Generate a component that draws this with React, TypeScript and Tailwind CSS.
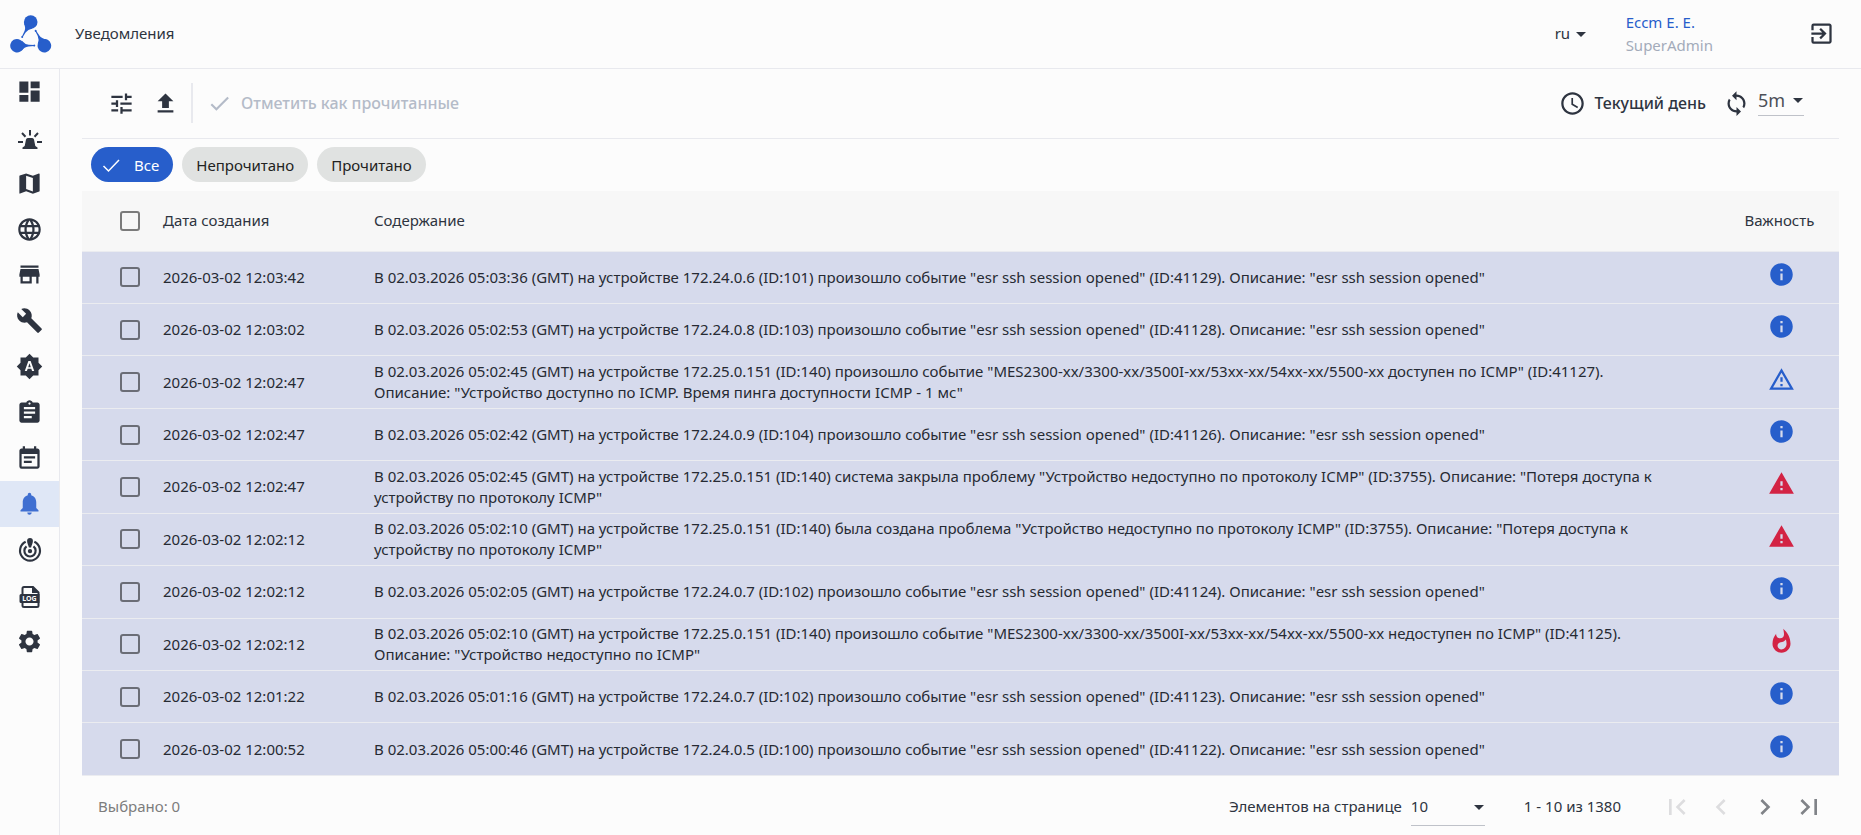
import React, { useState } from 'react';
import {
  MdArrowDropDown,
  MdAssignment,
  MdBrightnessAuto,
  MdBuild,
  MdCheck,
  MdChevronLeft,
  MdChevronRight,
  MdDashboard,
  MdEventNote,
  MdExitToApp,
  MdFirstPage,
  MdInfo,
  MdLanguage,
  MdLastPage,
  MdMap,
  MdNotifications,
  MdOutlineWarningAmber,
  MdSchedule,
  MdSettings,
  MdStore,
  MdSync,
  MdTune,
  MdUpload,
  MdWarning,
  MdWhatshot,
} from 'react-icons/md';

type Severity = 'info' | 'notice' | 'warning' | 'critical';

interface Notification {
  id: number;
  date: string;
  text: string;
  severity: Severity;
}

const sshEvent = (time: string, ip: string, device: number, id: number) =>
  `В 02.03.2026 ${time} (GMT) на устройстве ${ip} (ID:${device}) произошло событие "esr ssh session opened" (ID:${id}). Описание: "esr ssh session opened"`;

const notifications: Notification[] = [
  { id: 1, date: '2026-03-02 12:03:42', severity: 'info', text: sshEvent('05:03:36', '172.24.0.6', 101, 41129) },
  { id: 2, date: '2026-03-02 12:03:02', severity: 'info', text: sshEvent('05:02:53', '172.24.0.8', 103, 41128) },
  {
    id: 3,
    date: '2026-03-02 12:02:47',
    severity: 'notice',
    text: 'В 02.03.2026 05:02:45 (GMT) на устройстве 172.25.0.151 (ID:140) произошло событие "MES2300-xx/3300-xx/3500I-xx/53xx-xx/54xx-xx/5500-xx доступен по ICMP" (ID:41127). Описание: "Устройство доступно по ICMP. Время пинга доступности ICMP - 1 мс"',
  },
  { id: 4, date: '2026-03-02 12:02:47', severity: 'info', text: sshEvent('05:02:42', '172.24.0.9', 104, 41126) },
  {
    id: 5,
    date: '2026-03-02 12:02:47',
    severity: 'warning',
    text: 'В 02.03.2026 05:02:45 (GMT) на устройстве 172.25.0.151 (ID:140) система закрыла проблему "Устройство недоступно по протоколу ICMP" (ID:3755). Описание: "Потеря доступа к устройству по протоколу ICMP"',
  },
  {
    id: 6,
    date: '2026-03-02 12:02:12',
    severity: 'warning',
    text: 'В 02.03.2026 05:02:10 (GMT) на устройстве 172.25.0.151 (ID:140) была создана проблема "Устройство недоступно по протоколу ICMP" (ID:3755). Описание: "Потеря доступа к устройству по протоколу ICMP"',
  },
  { id: 7, date: '2026-03-02 12:02:12', severity: 'info', text: sshEvent('05:02:05', '172.24.0.7', 102, 41124) },
  {
    id: 8,
    date: '2026-03-02 12:02:12',
    severity: 'critical',
    text: 'В 02.03.2026 05:02:10 (GMT) на устройстве 172.25.0.151 (ID:140) произошло событие "MES2300-xx/3300-xx/3500I-xx/53xx-xx/54xx-xx/5500-xx недоступен по ICMP" (ID:41125). Описание: "Устройство недоступно по ICMP"',
  },
  { id: 9, date: '2026-03-02 12:01:22', severity: 'info', text: sshEvent('05:01:16', '172.24.0.7', 102, 41123) },
  { id: 10, date: '2026-03-02 12:00:52', severity: 'info', text: sshEvent('05:00:46', '172.24.0.5', 100, 41122) },
];

// One drop with a tail, repeated three times around the centre
const Logo = () => (
  <svg width="42" height="40" viewBox="0 0 42 40" fill="#275ecb" aria-hidden="true">
    {[0, 120, 240].map((angle) => (
      <g key={angle} transform={`rotate(${angle} 20.7 24.8)`}>
        <circle cx="20.7" cy="9" r="6.8" />
        <path d="M14 10Q16 15 14.3 18.500L11.800 23.800L12.600 24.300L15.600 19.600Q17.800 16.500 22.500 15.600Z" />
        <circle cx="12.200" cy="24" r="1" />
      </g>
    ))}
  </svg>
);

const AlarmIcon = () => (
  <svg width="24" height="24" viewBox="0 -3 24 24" aria-hidden="true">
    <path d="M6.700 17 8 10.500Q8.300 9 9.800 9h4.400q1.500 0 1.800 1.500L17.300 17 19.500 18.500V20H4.500v-1.500Z" fill="currentColor" />
    <path d="M12 1v5.500M4 4l3.500 3.700M20 4l-3.500 3.700M0 13h5M19 13h5" stroke="currentColor" strokeWidth="2" fill="none" />
  </svg>
);

const RadarIcon = () => (
  <svg width="26" height="26" viewBox="0 -1 24 24" aria-hidden="true">
    <g fill="none" stroke="currentColor" strokeWidth="2">
      <path d="M8 3.300a9.200 9.200 0 1 0 8 0" />
      <path d="M8.800 7.700a5.200 5.200 0 1 0 6.400 0" />
    </g>
    <circle cx="12" cy="12" r="2" fill="currentColor" />
    <path d="M12 0a2.700 2.700 0 0 1 2.700 2.700c0 2-1.200 4-1.700 6h-2c-.5-2-1.700-4-1.700-6A2.700 2.700 0 0 1 12 0Z" fill="currentColor" />
  </svg>
);

const LogIcon = () => (
  <svg width="24" height="26" viewBox="0 -3 24 26" aria-hidden="true">
    <path d="M4.500 9V3.500q0-1.500 1.500-1.500h9l5.500 5.500v13q0 1.500-1.500 1.500H6q-1.500 0-1.500-1.500V17" fill="none" stroke="currentColor" strokeWidth="2" />
    <path d="M14 1.500V8h7ZM3 9h18.500v9H3q-1.500 0-1.500-1.500v-6Q1.500 9 3 9Z" fill="currentColor" />
    <text x="11.500" y="16" textAnchor="middle" fill="#fcfcfc" fontSize="7" fontWeight="700">LOG</text>
  </svg>
);

const ChipCheck = () => (
  <svg width="24" height="24" viewBox="0 0 24 24" fill="none" stroke="currentColor" strokeWidth="1.5" aria-hidden="true">
    <path d="m2.500 13 5 5L18 7" />
  </svg>
);

const navItems = [
  { label: 'Панель', icon: <MdDashboard size={27} /> },
  { label: 'Аварии', icon: <AlarmIcon /> },
  { label: 'Карта', icon: <MdMap size={27} /> },
  { label: 'Сеть', icon: <MdLanguage size={27} /> },
  { label: 'Хранилище', icon: <MdStore size={27} /> },
  { label: 'Инструменты', icon: <MdBuild size={27} /> },
  { label: 'Автоматизация', icon: <MdBrightnessAuto size={27} /> },
  { label: 'Задачи', icon: <MdAssignment size={27} /> },
  { label: 'Календарь', icon: <MdEventNote size={27} /> },
  { label: 'Уведомления', icon: <MdNotifications size={27} />, active: true },
  { label: 'Мониторинг', icon: <RadarIcon /> },
  { label: 'Журнал', icon: <LogIcon /> },
  { label: 'Настройки', icon: <MdSettings size={27} /> },
];

const severityIcons: Record<Severity, React.ReactNode> = {
  info: <MdInfo size={27} color="#275ecb" />,
  notice: <MdOutlineWarningAmber size={27} color="#275ecb" />,
  warning: <MdWarning size={27} color="#d32344" />,
  critical: <MdWhatshot size={27} color="#d32344" />,
};

const Checkbox = ({ label, checked, onChange }: { label: string; checked: boolean; onChange: () => void }) => (
  <input
    type="checkbox"
    aria-label={label}
    checked={checked}
    onChange={onChange}
    className="block size-5 appearance-none rounded-[3px] border-2 border-black/50 checked:border-[#275ecb] checked:bg-[#275ecb]"
  />
);

const filters = ['Все', 'Непрочитано', 'Прочитано'];

const App = () => {
  const [filter, setFilter] = useState('Все');
  const [selected, setSelected] = useState<number[]>([]);

  const toggle = (id: number) =>
    setSelected((prev) => (prev.includes(id) ? prev.filter((x) => x !== id) : [...prev, id]));

  const toggleAll = () =>
    setSelected(selected.length === notifications.length ? [] : notifications.map((n) => n.id));

  return (
    <div className="flex min-h-screen flex-col bg-[#fcfcfc] font-['Noto_Sans',sans-serif] text-[15px] leading-[21px] text-[#2e3440]">
      <header className="flex h-[69px] items-center border-b border-[#e8e9ee] pr-[26px] pb-[2px] pl-[10px]">
        <a href="#" aria-label="Главная">
          <Logo />
        </a>
        <h1 className="ml-[23px] flex-1">Уведомления</h1>
        <div className="relative mr-[38px]">
          <select aria-label="Язык" className="w-[33px] appearance-none bg-transparent">
            <option>ru</option>
          </select>
          <MdArrowDropDown size={24} className="pointer-events-none absolute -top-px left-[14px]" />
        </div>
        <div className="mr-[95px] pt-[2px] leading-[23px]">
          <a href="#" className="block text-[#275ecb]">Eccm E. E.</a>
          <div className="text-[#a3abba]">SuperAdmin</div>
        </div>
        <button aria-label="Выйти">
          <MdExitToApp size={27} />
        </button>
      </header>

      <div className="flex flex-1">
        <nav className="w-[60px] shrink-0 border-r border-[#e8e9ee]">
          <div className="flex h-[595px] flex-col">
            {navItems.map((item) => (
              <a
                key={item.label}
                href="#"
                aria-label={item.label}
                className={`flex flex-1 items-center justify-center ${item.active ? 'bg-[#dfe7f6] text-[#3f6fd1]' : ''}`}
              >
                {item.icon}
              </a>
            ))}
          </div>
        </nav>

        <main className="min-w-0 flex-1 px-[22px]">
          <div className="flex h-[70px] items-center border-b border-[#e8e9ee] pr-[35px] pb-px pl-[26px]">
            <button aria-label="Фильтры">
              <MdTune size={27} />
            </button>
            <button aria-label="Экспорт" className="ml-[17px]">
              <MdUpload size={27} />
            </button>
            <div className="ml-3 h-10 w-[2px] bg-[#e8e9ee]" />
            <button disabled className="ml-[14px] flex items-center gap-[9px] text-base font-medium text-[#b4bbc8]">
              <MdCheck size={25} />
              Отметить как прочитанные
            </button>
            <button className="ml-auto flex items-center gap-[8px] text-base font-medium">
              <MdSchedule size={27} />
              Текущий день
            </button>
            <button aria-label="Обновить" className="ml-[17px]">
              <MdSync size={27} />
            </button>
            <div className="relative mb-[2px] ml-[8px]">
              <select
                aria-label="Интервал обновления"
                className="block h-[28px] w-[46px] appearance-none border-b border-[#bfc2c9] bg-transparent pb-1 text-lg leading-5 text-[#4c5058]"
              >
                <option>5m</option>
              </select>
              <MdArrowDropDown size={24} className="pointer-events-none absolute top-0 right-[-6px]" />
            </div>
          </div>

          <div className="flex h-[52px] items-center gap-[9px] pb-px pl-[9px]">
            {filters.map((name) => (
              <button
                key={name}
                onClick={() => setFilter(name)}
                className={`flex h-[35px] items-center rounded-full px-[14px] pt-px ${
                  name === filter ? 'bg-[#275ecb] text-white' : 'bg-[#e0e2e1] text-[#222222]'
                }`}
              >
                {name === filter && (
                  <span className="mr-[9px] -ml-1">
                    <ChipCheck />
                  </span>
                )}
                {name}
              </button>
            ))}
          </div>

          <table className="h-[585px] w-full table-fixed border-collapse text-left">
            <thead>
              <tr className="h-[60px] border-b border-[#ebecf0] bg-[#f7f7f7]">
                <th className="w-[81px] pl-[38px]">
                  <Checkbox label="Выбрать все" checked={selected.length === notifications.length} onChange={toggleAll} />
                </th>
                <th className="w-[211px] font-normal">Дата создания</th>
                <th className="font-normal">Содержание</th>
                <th className="w-[117px] pr-[2px] text-center font-normal">Важность</th>
              </tr>
            </thead>
            <tbody>
              {notifications.map((n) => (
                <tr key={n.id} className="h-[52px] border-b border-[#ebecf0] bg-[#d6daec] text-[#262a33]">
                  <td className="pl-[38px]">
                    <Checkbox label={`Выбрать ${n.date}`} checked={selected.includes(n.id)} onChange={() => toggle(n.id)} />
                  </td>
                  <td>{n.date}</td>
                  <td className="pr-[54px]">{n.text}</td>
                  <td>
                    <div className="flex justify-center pb-[6px] pl-[2px]">{severityIcons[n.severity]}</div>
                  </td>
                </tr>
              ))}
            </tbody>
          </table>

          <footer className="flex h-[59px] items-center pt-[2px] pr-[14px] pl-4">
            <div className="flex-1 text-[#7d7d7d]">Выбрано: {selected.length}</div>
            <label htmlFor="page-size">Элементов на странице</label>
            <div className="relative ml-[9px]">
              <select
                id="page-size"
                className="block h-[38px] w-[74px] appearance-none border-b border-[#bfc2c9] bg-transparent"
              >
                <option>10</option>
              </select>
              <MdArrowDropDown size={24} className="pointer-events-none absolute top-[7px] right-[-6px]" />
            </div>
            <div className="ml-[39px]">1 - 10 из 1380</div>
            <div className="ml-10 flex gap-3 text-[#808388]">
              <button disabled aria-label="Первая страница" className="text-[#dddddf]">
                <MdFirstPage size={32} />
              </button>
              <button disabled aria-label="Предыдущая страница" className="text-[#dddddf]">
                <MdChevronLeft size={32} />
              </button>
              <button aria-label="Следующая страница">
                <MdChevronRight size={32} />
              </button>
              <button aria-label="Последняя страница">
                <MdLastPage size={32} />
              </button>
            </div>
          </footer>
        </main>
      </div>
    </div>
  );
};

export default App;
